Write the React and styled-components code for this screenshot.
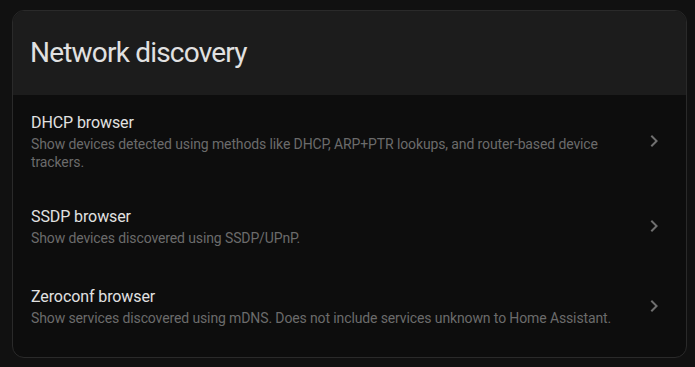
import React from 'react';
import styled, { createGlobalStyle } from 'styled-components';

const GlobalStyle = createGlobalStyle`
    html, body {
        margin: 0;
        background: #111111;
    }
    body {
        font-family: Roboto, 'Noto Sans', sans-serif;
        -webkit-font-smoothing: antialiased;
    }
`;

const Page = styled.div`
    padding: 10px 8px 10px 12px;
`;

const Card = styled.div`
    background: #0d0d0d;
    border: 1px solid #2a2a2a;
    border-radius: 12px;
    overflow: hidden;
`;

const Header = styled.div`
    background: #1c1c1c;
    padding: 26px 17px 26px;
`;

const Title = styled.h1`
    margin: 0;
    font-size: 28px;
    line-height: 32px;
    font-weight: 400;
    letter-spacing: -0.8px;
    color: #e1e1e1;
`;

const List = styled.div`
    display: flex;
    flex-direction: column;
    padding-bottom: 12px;
`;

const Row = styled.div`
    display: flex;
    align-items: center;
    gap: 12px;
    min-height: 80px;
    box-sizing: border-box;
    padding: 16px 20px 14px 18px;
    cursor: pointer;
`;

const Text = styled.div`
    flex: 1;
    display: flex;
    flex-direction: column;
`;

const Name = styled.div`
    font-size: 16px;
    line-height: 24px;
    letter-spacing: -0.1px;
    color: #e1e1e1;
`;

const Description = styled.div`
    font-size: 14px;
    line-height: 18px;
    letter-spacing: -0.12px;
    color: #6b6b6b;
`;

const Chevron = styled.svg`
    width: 24px;
    height: 24px;
    flex-shrink: 0;
    fill: #6f6f6f;
`;

const items = [
    {
        name: 'DHCP browser',
        description: 'Show devices detected using methods like DHCP, ARP+PTR lookups, and router-based device trackers.'
    },
    {
        name: 'SSDP browser',
        description: 'Show devices discovered using SSDP/UPnP.'
    },
    {
        name: 'Zeroconf browser',
        description: 'Show services discovered using mDNS. Does not include services unknown to Home Assistant.'
    }
];

export default function App() {
    return (
        <Page>
            <GlobalStyle />
            <Card>
                <Header>
                    <Title>Network discovery</Title>
                </Header>
                <List>
                    {items.map(item => (
                        <Row key={item.name}>
                            <Text>
                                <Name>{item.name}</Name>
                                <Description>{item.description}</Description>
                            </Text>
                            <Chevron viewBox="0 0 24 24">
                                <path d="M8.59,16.58L13.17,12L8.59,7.41L10,6L16,12L10,18L8.59,16.58Z" />
                            </Chevron>
                        </Row>
                    ))}
                </List>
            </Card>
        </Page>
    );
}
